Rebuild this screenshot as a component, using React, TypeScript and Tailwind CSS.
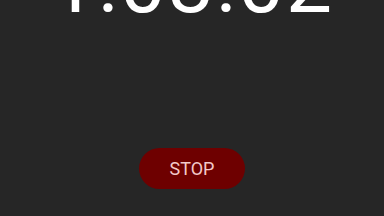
import React from "react";

export default function App() {
  return (
    <div
      className="relative h-[216px] w-[384px] overflow-hidden bg-[#262626]"
      style={{ fontFamily: "Roboto, 'Noto Sans', sans-serif" }}
    >
      <div className="flex h-[28px] items-end justify-center overflow-hidden">
        <div className="shrink-0 translate-y-[-3px] text-[82px] font-normal leading-none tracking-[2px] text-white">
          1:03:02
        </div>
      </div>
      <div className="flex justify-center pt-[120px]">
        <button className="flex h-[41px] w-[106px] items-center justify-center rounded-full bg-[#6e0000] text-[18px] text-[#f3c9c9]">
          STOP
        </button>
      </div>
    </div>
  );
}
